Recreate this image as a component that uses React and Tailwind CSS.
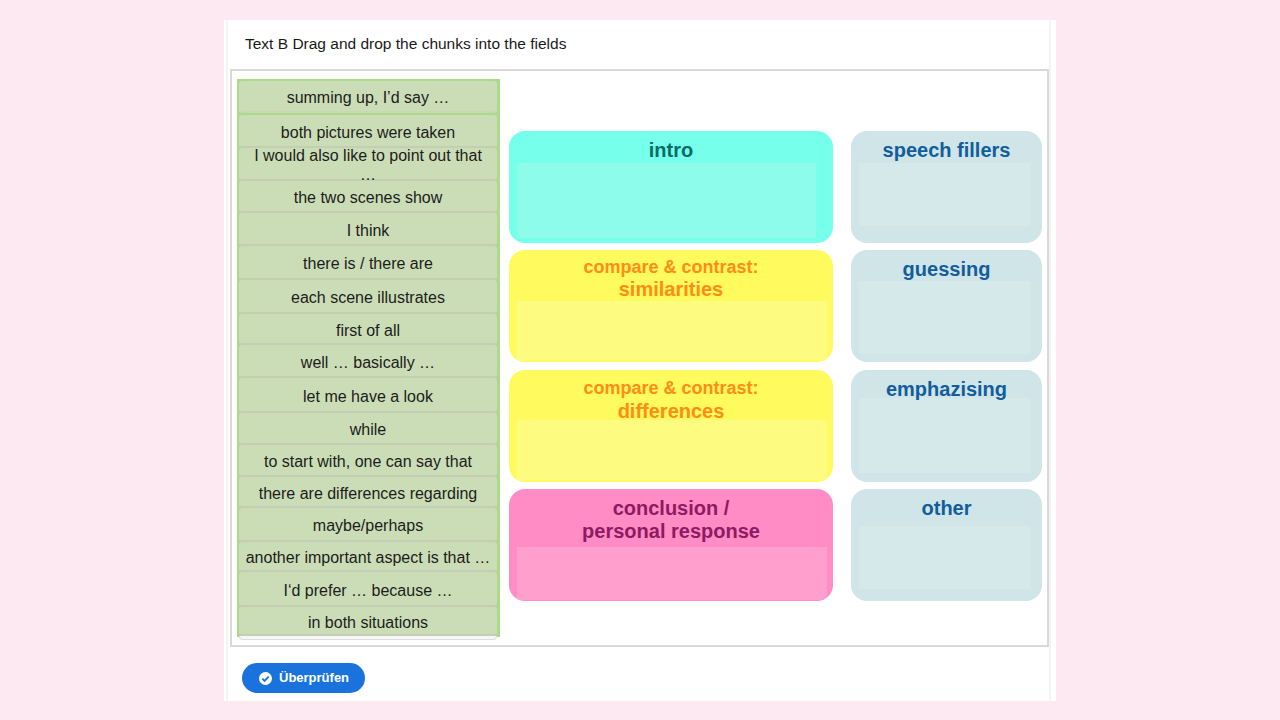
const chunks = [
  { text: "summing up, I’d say …", cls: "h-[32px] mt-[2px] border-[#c7d9b2]" },
  { text: "both pictures were taken", cls: "h-[33px] mt-[2px]" },
  { text: "I would also like to point out that", extra: "…", cls: "h-[33px]" },
  { text: "the two scenes show", cls: "h-[32px]" },
  { text: "I think", cls: "h-[33px]" },
  { text: "there is / there are", cls: "h-[34px]" },
  { text: "each scene illustrates", cls: "h-[34px]" },
  { text: "first of all", cls: "h-[31px]" },
  { text: "well … basically …", cls: "h-[33px]" },
  { text: "let me have a look", cls: "h-[35px]" },
  { text: "while", cls: "h-[32px]" },
  { text: "to start with, one can say that", cls: "h-[32px]" },
  { text: "there are differences regarding", cls: "h-[31px]" },
  { text: "maybe/perhaps", cls: "h-[34px]" },
  { text: "another important aspect is that …", cls: "h-[30px]" },
  { text: "I‘d prefer … because …", cls: "h-[35px]" },
  { text: "in both situations", cls: "h-[29px] border-b-0" },
];

const blue = "bg-[#cfe5e7] text-[#125d9b] text-[20px]";
const blueInner = "bg-[#d5e8ea] w-[171px]";
const yellow = "bg-[#fffb5f] text-[#ff8c14] text-[18px]";
const yellowInner = "bg-[#fdfb80] w-[310px]";

const zones = [
  { title: ["intro"], box: "bg-[#76ffeb] text-[#0b6b68] text-[20px]", inner: "bg-[#8efcea] w-[299px] h-[75px]", head: "h-[32px] pt-[8px]", wrap: "mt-0" },
  { title: ["speech fillers"], box: blue, inner: `${blueInner} h-[63px]`, head: "h-[32px] pt-[8px]", wrap: "mt-0" },
  { title: ["compare & contrast:", "similarities"], box: yellow, inner: `${yellowInner} h-[59px]`, head: "h-[51px] pt-[6px]", wrap: "mt-[7px]", second: "text-[20px]" },
  { title: ["guessing"], box: blue, inner: `${blueInner} h-[73px]`, head: "h-[31px] pt-[8px]", wrap: "mt-[7px]" },
  { title: ["compare & contrast:", "differences"], box: yellow, inner: `${yellowInner} h-[60px]`, head: "h-[50px] pt-[7px]", wrap: "mt-[8px]", second: "text-[20px] mt-[1px]" },
  { title: ["emphazising"], box: blue, inner: `${blueInner} h-[75px]`, head: "h-[28px] pt-[8px]", wrap: "mt-[8px]" },
  { title: ["conclusion /", "personal response"], box: "bg-[#ff8cc4] text-[#8e1a63] text-[20px]", inner: "bg-[#fe9fcd] w-[310px] h-[53px]", head: "h-[58px] pt-[8px]", wrap: "mt-[7px]", second: "mt-[1px]" },
  { title: ["other"], box: blue, inner: `${blueInner} h-[63px]`, head: "h-[37px] pt-[8px]", wrap: "mt-[7px]" },
];

export default function App() {
  return (
    <div className="h-[720px] bg-[#fce9f2] pt-[20px] font-['Liberation_Sans',Arial,sans-serif] overflow-hidden">
      <div className="ml-[224px] w-[832px] h-[681px] bg-white pl-[2px]">
        <div className="w-[825px] h-full border-x-2 border-[#f3f3f3] pl-[2px]">
          <div className="h-[49px] pl-[15px] pt-[14px] text-[15.5px] leading-[20px] text-[#1a1a1a]">
            Text B Drag and drop the chunks into the fields
          </div>
          <div className="flex w-[819px] h-[578px] border-2 border-[#d9d9d9] pl-[5px] pt-[8px]">
            <div className="relative w-[263px] h-[558px] shrink-0 bg-[#aed88b]">
              <div className="pl-[2px] pr-[3px] flex flex-col">
                {chunks.map((c) => (
                  <div
                    key={c.text}
                    className={`flex justify-center text-center w-full bg-[#cbddb6] border-b-2 border-[#c2cfb2] rounded-[3px] text-[16px] text-[#1c1c1c] px-[4px] ${c.extra ? "relative z-10 items-start leading-[19px]" : "items-center leading-[20px] pt-[4px]"} ${c.cls}`}
                  >
                    {c.extra ? (
                      <span className="block -mt-[2px]">
                        {c.text}
                        <br />
                        {c.extra}
                      </span>
                    ) : (
                      c.text
                    )}
                  </div>
                ))}
              </div>
              <div className="absolute left-[2px] top-[557px] w-[258px] h-[4px] bg-[#f7f7f7] border border-t-0 border-[#dddddd] rounded-b-[4px]" />
            </div>
            <div className="grid grid-cols-[324px_191px] gap-x-[18px] ml-[9px] mt-[52px] content-start">
              {zones.map((z) => (
                <div key={z.title[0]} className={z.wrap}>
                  <div className={`h-[112px] rounded-[16px] overflow-hidden font-bold text-center leading-[22px] ${z.box}`}>
                    <div className={z.head}>
                      {z.title.map((t, i) => (
                        <div key={t} className={i === 1 && z.second ? z.second : ""}>
                          {t}
                        </div>
                      ))}
                    </div>
                    <div className={`ml-[8px] ${z.inner}`} />
                  </div>
                </div>
              ))}
            </div>
          </div>
          <div className="pl-[12px] pt-[16px]">
            <button className="flex items-center gap-[7px] h-[30px] w-[123px] pl-[17px] rounded-full bg-[#1a73dc] text-white text-[13px] font-bold">
              <svg width="13" height="13" viewBox="0 0 14 14">
                <circle cx="7" cy="7" r="7" fill="#ffffff" />
                <path d="M3.6 7.2 L6 9.6 L10.4 4.9" fill="none" stroke="#1a73dc" strokeWidth="2" />
              </svg>
              Überprüfen
            </button>
          </div>
        </div>
      </div>
    </div>
  );
}
